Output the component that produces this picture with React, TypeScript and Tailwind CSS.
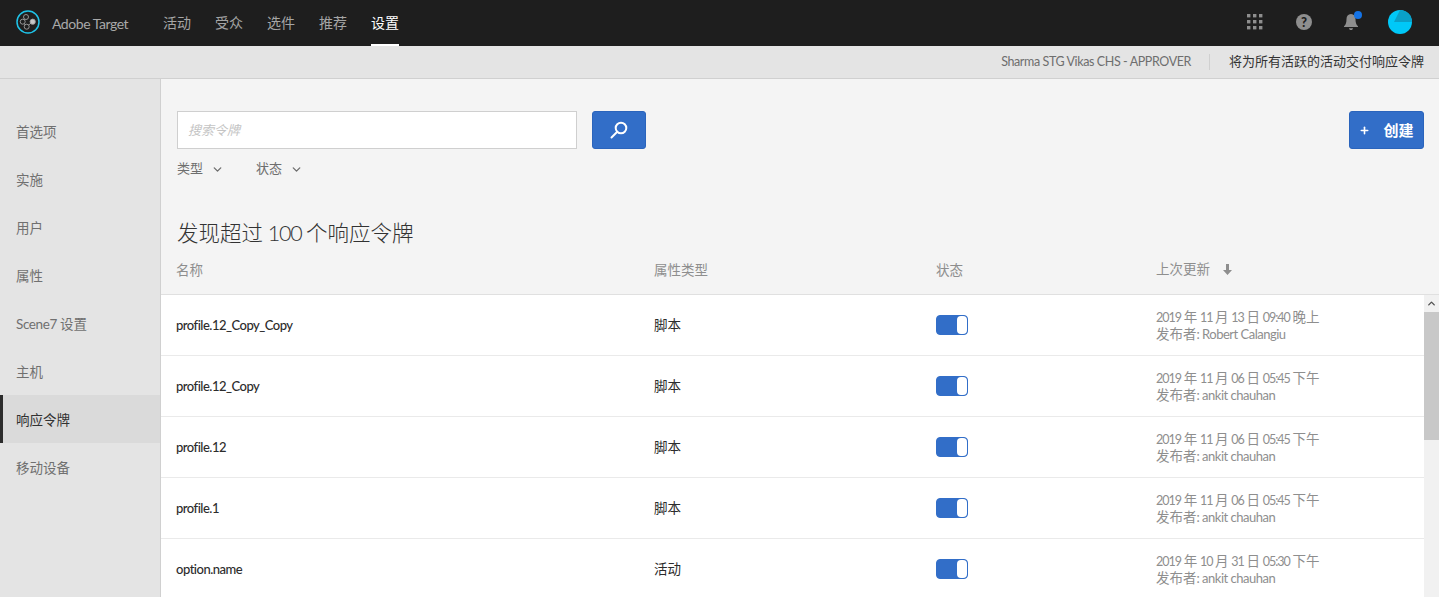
import { ChevronDown, ChevronUp, Plus } from "lucide-react";

const FONT = "font-['Lato','Noto_Sans_CJK_SC',sans-serif]";

const NAV = ["活动", "受众", "选件", "推荐", "设置"];
const SIDE = ["首选项", "实施", "用户", "属性", "Scene7 设置", "主机", "响应令牌", "移动设备"];

const ROWS = [
  { name: "profile.12_Copy_Copy", type: "脚本", date: "2019 年 11 月 13 日 09:40 晚上", by: "发布者: Robert Calangiu" },
  { name: "profile.12_Copy", type: "脚本", date: "2019 年 11 月 06 日 05:45 下午", by: "发布者: ankit chauhan" },
  { name: "profile.12", type: "脚本", date: "2019 年 11 月 06 日 05:45 下午", by: "发布者: ankit chauhan" },
  { name: "profile.1", type: "脚本", date: "2019 年 11 月 06 日 05:45 下午", by: "发布者: ankit chauhan" },
  { name: "option.name", type: "活动", date: "2019 年 10 月 31 日 05:30 下午", by: "发布者: ankit chauhan" },
];

const GRID = "grid grid-cols-[478px_282px_220px_1fr] pl-[15px]";

// Latin runs are set tighter than the CJK runs around them
function Mixed({ text, latin }: { text: string; latin: string }) {
  return (
    <>
      {text.split(/([\u3000-\u9fff]+)/).map((part, i) =>
        i % 2 === 1 ? <span key={i}>{part}</span> : <span key={i} className={latin}>{part}</span>
      )}
    </>
  );
}

function Logo() {
  return (
    <svg className="-mt-[2px]" width="24" height="24" viewBox="0 0 24 24" fill="none">
      <circle cx="12" cy="12" r="11" stroke="#1fc3e8" strokeWidth="1.5" />
      <g stroke="#a0a0a0" strokeWidth="0.9">
        <path d="M10 7 6.700 11.700 10.700 16.700 16.700 11.700" />
        <circle cx="10" cy="7" r="2.500" fill="#1e1e1e" />
        <circle cx="6.700" cy="11.700" r="2.500" fill="#1e1e1e" />
        <circle cx="10.700" cy="16.700" r="2.500" fill="#1e1e1e" />
        <circle cx="16.700" cy="11.700" r="2.600" fill="#c8c8c8" />
      </g>
    </svg>
  );
}

function GridIcon() {
  return (
    <svg className="ml-[1px]" width="16" height="16" viewBox="0 0 16 16" fill="#8e8e8e">
      {[0, 6, 12].map((y) =>
        [0, 6, 12].map((x) => <rect key={`${x}-${y}`} x={x} y={y} width="3.4" height="3.4" />)
      )}
    </svg>
  );
}

function Toggle() {
  return (
    <div className="flex h-[20px] w-[32px] rounded-[4px] border border-[#326ec8] bg-[#326ec8]">
      <div className="ml-auto h-full w-[10px] rounded-[4px] bg-white" />
    </div>
  );
}

export default function App() {
  return (
    <div className={`flex h-[597px] w-[1439px] flex-col overflow-hidden bg-[#f4f4f4] ${FONT}`}>
      <header className="flex h-[46px] shrink-0 items-center bg-[#1e1e1e] pl-[16px] pr-[27px]">
        <Logo />
        <span className="ml-[12px] w-[76px] whitespace-nowrap text-[14px] tracking-[-0.45px] text-[#a9a9a9]">
          Adobe Target
        </span>
        <nav className="ml-[35px] flex h-full gap-[24px]">
          {NAV.map((item) => (
            <a
              key={item}
              className={`flex h-full items-center border-b-2 text-[14px] ${
                item === "设置" ? "border-white text-white" : "border-transparent text-[#a5a5a5]"
              }`}
            >
              {item}
            </a>
          ))}
        </nav>
        <div className="-mt-[2px] ml-auto flex items-center">
          <GridIcon />
          <svg className="ml-[33px]" width="16" height="16" viewBox="0 0 16 16">
            <circle cx="8" cy="8" r="8" fill="#8e8e8e" />
            <text x="8" y="12.800" textAnchor="middle" fontSize="13" fontWeight="900" fill="#1e1e1e">?</text>
          </svg>
          <div className="relative ml-[31px] h-[20px] w-[16px]">
            <svg width="16" height="20" viewBox="0 0 16 20" fill="#8e8e8e">
              <path d="M8 2c-3 0-4.500 2.200-4.500 5 0 3.500-.6 5.500-2.500 7.300v.7h14v-.7C13.100 12.500 12.500 10.500 12.500 7c0-2.800-1.500-5-4.500-5z" />
              <path d="M6 16.200h4c0 1-.9 1.800-2 1.800s-2-.8-2-1.800z" />
            </svg>
            <span className="absolute -right-[3px] -top-[1px] h-[8px] w-[8px] rounded-full bg-[#1473e6]" />
          </div>
          <svg className="ml-[29px]" width="24" height="24" viewBox="0 0 24 24">
            <circle cx="12" cy="12" r="12" fill="#00c8f8" />
            <path d="M12 0 A12 12 0 0 1 24 12 H6 Z" fill="#0aa0c8" />
          </svg>
        </div>
      </header>

      <div className="flex h-[33px] shrink-0 items-center justify-end border-b border-[#d0d0d0] bg-[#e4e4e4] pr-[15px] text-[13px]">
        <span className="whitespace-nowrap text-[12.5px] tracking-[-0.4px] text-[#6e6e6e]">
          Sharma STG Vikas CHS - APPROVER
        </span>
        <span className="ml-[18px] mr-[19px] h-[16px] w-px bg-[#d0d0d0]" />
        <span className="text-[#323232]">将为所有活跃的活动交付响应令牌</span>
      </div>

      <div className="flex min-h-0 flex-1">
        <aside className="w-[161px] shrink-0 border-r border-[#d0d0d0] bg-[#e4e4e4] pt-[28px]">
          {SIDE.map((item) => (
            <div
              key={item}
              className={`flex h-[48px] items-center pt-[2px] text-[13.5px] ${
                item === "响应令牌"
                  ? "border-l-[3px] border-[#2c2c2c] bg-[#dadada] pl-[13px] text-[#323232]"
                  : "pl-[16px] text-[#707070]"
              }`}
            >
              <span>
                <Mixed text={item} latin="tracking-[-0.4px]" />
              </span>
            </div>
          ))}
        </aside>

        <main className="relative min-w-0 flex-1">
          <div className="flex items-start pl-[16px] pr-[15px] pt-[32px]">
            <div className="flex h-[38px] w-[400px] items-center border border-[#cfcfcf] bg-white pl-[10px] pt-[1px] text-[13px] italic text-[#c4c4c4]">
              搜索令牌
            </div>
            <button className="ml-[15px] flex h-[38px] w-[54px] items-center justify-center rounded-[3px] border border-[#2a64bc] bg-[#326ec8]">
              <svg width="18" height="18" viewBox="0 0 18 18" fill="none" stroke="white" strokeWidth="2">
                <circle cx="11" cy="7" r="5.300" />
                <path d="M7 11 1.500 16.500" strokeLinecap="round" />
              </svg>
            </button>
            <button className="ml-auto flex h-[38px] w-[75px] items-center justify-center gap-[13px] rounded-[3px] border border-[#2a64bc] bg-[#326ec8] text-[15px] font-bold text-white">
              <Plus size={11} strokeWidth={3.500} />
              创建
            </button>
          </div>

          <div className="mt-[11px] flex h-[18px] items-center pl-[16px] text-[13px] text-[#6e6e6e]">
            <span>类型</span>
            <ChevronDown className="ml-[8px]" size={13} strokeWidth={2.500} />
            <span className="ml-[32px]">状态</span>
            <ChevronDown className="ml-[8px]" size={13} strokeWidth={2.500} />
          </div>

          <h1 className="mt-[40px] pl-[16px] text-[21.5px] font-light leading-[30px] text-[#323232]">
            <Mixed text="发现超过 100 个响应令牌" latin="tracking-[-1.2px]" />
          </h1>

          <div className={`${GRID} h-[47px] items-start border-b border-[#e0e0e0] pt-[13px] text-[13.5px] leading-[18px] text-[#8e8e8e]`}>
            <span>名称</span>
            <span>属性类型</span>
            <span>状态</span>
            <span className="-mt-[1px] flex items-center gap-[13px]">
              上次更新
              <svg width="9" height="11" viewBox="0 0 9 11" fill="#8e8e8e">
                <path d="M3 0h3v6h3L4.500 11 0 6h3z" />
              </svg>
            </span>
          </div>

          <div className="mr-[15px] bg-white">
            {ROWS.map((row) => (
              <div key={row.name} className={`${GRID} h-[61px] items-center border-b border-[#eaeaea] text-[13px]`}>
                <span className="pt-[2px] font-medium tracking-[-0.5px] text-[#2c2c2c]">{row.name}</span>
                <span className="text-[13.5px] text-[#2c2c2c]">{row.type}</span>
                <Toggle />
                <div className="whitespace-nowrap pt-[2px] text-[13.5px] leading-[17px] text-[#8e8e8e]">
                  <div>
                    <Mixed text={row.date} latin="text-[12.5px] tracking-[-1px] [word-spacing:0.5px]" />
                  </div>
                  <div>
                    <Mixed text={row.by} latin="text-[13px] tracking-[-0.5px]" />
                  </div>
                </div>
              </div>
            ))}
          </div>

          <div className="absolute bottom-0 right-0 top-[216px] flex w-[15px] flex-col bg-[#f1f1f1]">
            <div className="flex h-[17px] items-center justify-center text-[#505050]">
              <ChevronUp size={11} strokeWidth={3} />
            </div>
            <div className="h-[128px] bg-[#c8c8c8]" />
          </div>
        </main>
      </div>
    </div>
  );
}
